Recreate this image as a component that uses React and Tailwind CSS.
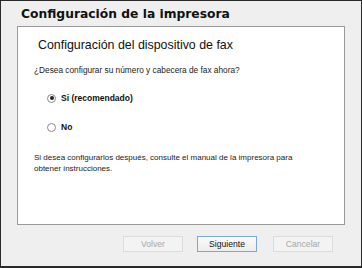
export default function App() {
  const title = { fontFamily: '"DejaVu Sans", "Liberation Sans", sans-serif' };
  const font = { fontFamily: '"Liberation Sans", Arial, sans-serif' };
  return (
    <div className="w-[362px] h-[268px] bg-[#efefef] border border-[#2a2a2a] border-b-2 box-border flex flex-col" style={font}>
      <div className="h-[25px] pl-[20px] pt-[6px] text-[12.3px] font-bold text-[#111] leading-[15px]" style={title}>
        Configuración de la impresora
      </div>
      <div className="ml-[16px] mr-[16px] h-[199px] bg-white border border-[#9a9a9a] pl-[16px] pt-[11px] flex flex-col">
        <div className="ml-[4px] text-[12.4px] text-[#111] leading-[15px]">Configuración del dispositivo de fax</div>
        <div className="mt-[12px] text-[8.3px] text-[#222] leading-[10px]">¿Desea configurar su número y cabecera de fax ahora?</div>
        <div className="mt-[18px] ml-[13px] flex items-center gap-[5px] h-[10px]">
          <span className="w-[9px] h-[9px] rounded-full border border-[#8a8a8a] flex items-center justify-center bg-white">
            <span className="w-[4px] h-[4px] rounded-full bg-[#222]"></span>
          </span>
          <span className="text-[8.5px] font-bold text-[#111]">Si (recomendado)</span>
        </div>
        <div className="mt-[19px] ml-[13px] flex items-center gap-[5px] h-[10px]">
          <span className="w-[9px] h-[9px] rounded-full border border-[#8a8a8a] bg-white"></span>
          <span className="text-[8.5px] font-bold text-[#111]">No</span>
        </div>
        <div className="mt-[20px] text-[8px] text-[#222] leading-[11px] w-[272px]">
          Si desea configurarlos después, consulte el manual de la impresora para obtener instrucciones.
        </div>
      </div>
      <div className="flex pl-[122px] pt-[11px]">
        <div className="w-[60px] h-[16px] border border-[#dcdcdc] bg-[#f3f3f3] text-[8.6px] text-[#a8a8a8] flex items-center justify-center">Volver</div>
        <div className="ml-[14px] w-[60px] h-[16px] border border-[#7aa7dc] bg-gradient-to-b from-[#fbfbfb] to-[#ececec] text-[8.6px] text-[#111] flex items-center justify-center">Siguiente</div>
        <div className="ml-[16px] w-[60px] h-[16px] border border-[#dcdcdc] bg-[#f3f3f3] text-[8.6px] text-[#a8a8a8] flex items-center justify-center">Cancelar</div>
      </div>
    </div>
  );
}
